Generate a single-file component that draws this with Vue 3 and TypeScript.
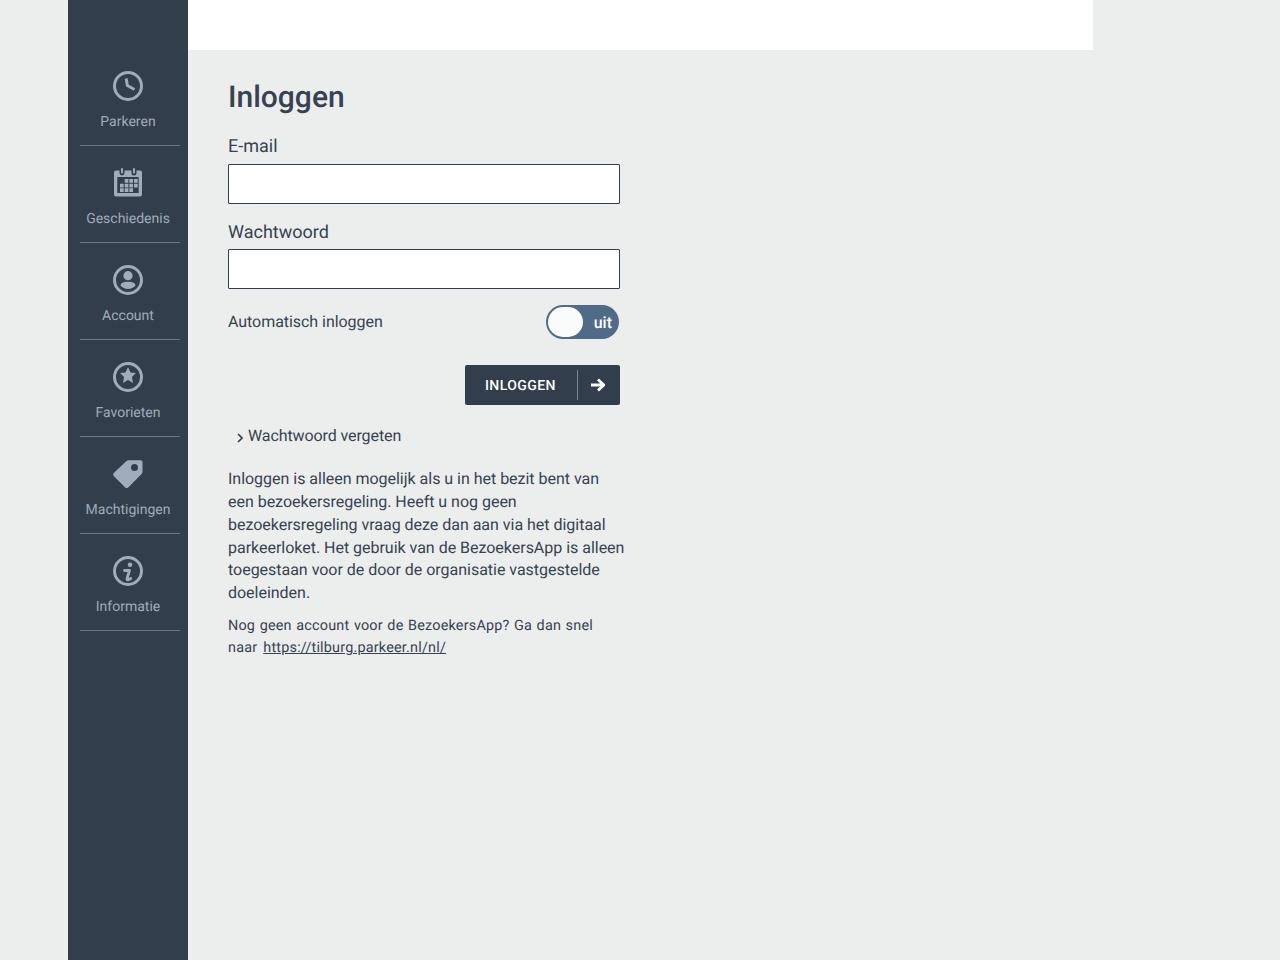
<script setup lang="ts">
const items: { label: string; icon: string }[] = [
  { label: 'Parkeren', icon: 'clock' },
  { label: 'Geschiedenis', icon: 'calendar' },
  { label: 'Account', icon: 'user' },
  { label: 'Favorieten', icon: 'star' },
  { label: 'Machtigingen', icon: 'tag' },
  { label: 'Informatie', icon: 'info' },
]
</script>

<template>
  <div class="page">
    <aside class="sidebar">
      <nav class="nav">
        <a v-for="item in items" :key="item.label" class="nav-item">
          <svg class="icon" viewBox="0 0 30 30" width="30" height="30" aria-hidden="true">
            <template v-if="item.icon === 'clock'">
              <circle cx="15" cy="15" r="13.500" fill="none" stroke="currentColor" stroke-width="3" />
              <path d="M13.200 7.500L14.300 14.500L21.500 18.500" fill="none" stroke="currentColor" stroke-width="3" stroke-linejoin="round" />
            </template>
            <template v-else-if="item.icon === 'calendar'">
              <path fill="currentColor" fill-rule="evenodd" d="M3 2.500h3.500v2.500a2.500 2.500 0 0 0 5 0V2.500h7v2.500a2.500 2.500 0 0 0 5 0V2.500H27a2 2 0 0 1 2 2V26.500a2 2 0 0 1-2 2H3a2 2 0 0 1-2-2V4.500a2 2 0 0 1 2-2zM4.300 9v16h21.400V9z" />
              <rect x="8" y="0" width="2" height="5.500" rx="1" fill="currentColor" />
              <rect x="20" y="0" width="2" height="5.500" rx="1" fill="currentColor" />
              <path fill="currentColor" d="M11.700 11h3.700v3.700h-3.700zM16.300 11h3.700v3.700h-3.700zM21 11h3.700v3.700h-3.700zM7 15.700h3.700v3.700h-3.700zM11.700 15.700h3.700v3.700h-3.700zM16.300 15.700h3.700v3.700h-3.700zM21 15.700h3.700v3.700h-3.700zM7 20.300h3.700v3.700h-3.700zM11.700 20.300h3.700v3.700h-3.700zM16.300 20.300h3.700v3.700h-3.700z" />
            </template>
            <template v-else-if="item.icon === 'user'">
              <circle cx="15" cy="15" r="13.500" fill="none" stroke="currentColor" stroke-width="3" />
              <circle cx="15" cy="10.700" r="4.600" fill="currentColor" />
              <path fill="currentColor" d="M7.500 20.500c0-2.200 3-3.700 7.500-3.700s7.500 1.500 7.500 3.700c-1.800 2.200-4.500 3.500-7.500 3.500s-5.700-1.300-7.500-3.500z" />
            </template>
            <template v-else-if="item.icon === 'star'">
              <circle cx="15" cy="15" r="13.500" fill="none" stroke="currentColor" stroke-width="3" />
              <path fill="currentColor" d="M15 5l2.500 5.500 5.500.6-4.100 3.900 1.200 6-5.100-3-5.100 3 1.200-6-4.100-3.900 5.500-.6z" />
            </template>
            <template v-else-if="item.icon === 'tag'">
              <path fill="currentColor" fill-rule="evenodd" d="M15.500 1.200H27.500a2 2 0 0 1 2 2V13a3 3 0 0 1-.9 2L15.500 28.200a2.500 2.500 0 0 1-3.500 0L1 17.200a2.500 2.500 0 0 1 0-3.500L13.500 2a3 3 0 0 1 2-.8zM21.500 5a3.500 3.500 0 1 0 0 7 3.500 3.500 0 0 0 0-7z" />
            </template>
            <template v-else>
              <circle cx="15" cy="15" r="13.500" fill="none" stroke="currentColor" stroke-width="3" />
              <circle cx="17" cy="8.700" r="2.300" fill="currentColor" />
              <path fill="none" stroke="currentColor" stroke-width="2.800" stroke-linecap="round" stroke-linejoin="round" d="M11.500 14.500h5l-2.500 8c-.3 1 .4 1.500 1.200 1.200l2.600-1.300" />
            </template>
          </svg>
          <span class="nav-label">{{ item.label }}</span>
        </a>
      </nav>
    </aside>

    <div class="content">
      <header class="topbar"></header>
      <main class="main">
        <h1 class="title">Inloggen</h1>
        <form class="form" @submit.prevent>
          <label class="label" for="email">E-mail</label>
          <input id="email" class="input" type="email" />
          <label class="label label-second" for="password">Wachtwoord</label>
          <input id="password" class="input" type="password" />

          <div class="auto-row">
            <span class="auto-text">Automatisch inloggen</span>
            <span class="toggle">
              <span class="knob"></span>
              <span class="toggle-text">uit</span>
            </span>
          </div>

          <div class="actions">
            <button class="button" type="submit">
              <span class="button-text">INLOGGEN</span>
              <span class="button-icon">
                <svg viewBox="0 0 16 14" width="16" height="14" aria-hidden="true">
                  <path d="M1 7h12.500M8 1.500L13.800 7 8 12.500" fill="none" stroke="#fff" stroke-width="2.800" stroke-linejoin="round" />
                </svg>
              </span>
            </button>
          </div>

          <a class="forgot">
            <svg viewBox="0 0 6 10" width="6" height="10" aria-hidden="true">
              <path d="M1 1l4 4-4 4" fill="none" stroke="#323e4c" stroke-width="1.600" />
            </svg>
            <span>Wachtwoord vergeten</span>
          </a>

          <p class="intro">Inloggen is alleen mogelijk als u in het bezit bent van een bezoekersregeling. Heeft u nog geen bezoekersregeling vraag deze dan aan via het digitaal parkeerloket. Het gebruik van de BezoekersApp is alleen toegestaan voor de door de organisatie vastgestelde doeleinden.</p>
          <div class="note">
            <span class="note-line">Nog geen account voor de BezoekersApp? Ga dan snel</span>
            <span class="note-line"><span>naar</span><a class="link">https://tilburg.parkeer.nl/nl/</a></span>
          </div>
        </form>
      </main>
    </div>
  </div>
</template>

<style>
html, body { margin: 0; background: #eceeed; }
</style>

<style scoped>
.page {
  display: flex;
  min-height: 960px;
  height: 960px;
  overflow: hidden;
  padding-left: 68px;
  box-sizing: border-box;
  background: #eceeed;
  color: #364251;
  font-family: Roboto, "Liberation Sans", sans-serif;
  text-rendering: geometricPrecision;
}
.sidebar {
  flex: 0 0 120px;
  background: #323e4c;
  padding-top: 49px;
  box-sizing: border-box;
}
.nav { display: flex; flex-direction: column; }
.nav-item {
  box-sizing: border-box;
  height: 97px;
  margin-left: 12px;
  width: 100px;
  display: flex;
  flex-direction: column;
  align-items: center;
  border-bottom: 1px solid #6c7887;
  color: #a0abbb;
  padding-top: 22px;
}
.icon { display: block; flex: none; margin-left: -4px; }
.nav-label {
  font-size: 14px;
  line-height: 20px;
  margin-top: 11px;
  margin-left: -4px;
  white-space: nowrap;
}
.content { flex: 0 0 905px; display: flex; flex-direction: column; }
.topbar { height: 50px; background: #fff; flex: none; }
.main { padding: 29px 0 0 40px; }
.title {
  margin: 0;
  font-size: 30px;
  line-height: 38px;
  font-weight: 500;
}
.form { width: 392px; display: flex; flex-direction: column; margin-top: 16px; }
.label { font-size: 18px; line-height: 24px; margin-bottom: 7px; position: relative; top: 2px; }
.label-second { margin-top: 15px; margin-bottom: 6px; }
.input {
  box-sizing: border-box;
  height: 40px;
  width: 100%;
  border: 1px solid #323e4c;
  border-radius: 1px;
  background: #fff;
  padding: 0 8px;
  outline: none;
}
.auto-row {
  display: flex;
  justify-content: space-between;
  align-items: center;
  margin-top: 16px;
  font-size: 16px;
  height: 34px;
}
.auto-text { letter-spacing: -0.05px; margin-top: -2px; }
.toggle {
  box-sizing: border-box;
  width: 73px;
  height: 34px;
  border-radius: 17px;
  background: #4f6b88;
  position: relative;
  display: flex;
  align-items: center;
  justify-content: flex-end;
  padding-right: 7px;
  margin-right: 1px;
}
.knob {
  position: absolute;
  left: 2px;
  top: 2px;
  width: 35px;
  height: 30px;
  border-radius: 15px;
  background: #fafbfb;
}
.toggle-text { color: #fff; font-size: 16px; font-weight: 500; }
.actions { display: flex; justify-content: flex-end; margin-top: 26px; }
.button {
  width: 155px;
  height: 40px;
  border: 0;
  border-radius: 2px;
  background: #323e4c;
  color: #fff;
  display: flex;
  align-items: center;
  padding: 0;
  font-family: inherit;
  text-rendering: geometricPrecision;
}
.button-text {
  width: 112px;
  box-sizing: border-box;
  padding-left: 20px;
  padding-top: 2px;
  text-align: left;
  font-size: 14px;
  font-weight: 500;
  letter-spacing: 0.4px;
}
.button-icon {
  height: 30px;
  flex: 1;
  border-left: 1px solid #7d8793;
  display: flex;
  align-items: center;
  justify-content: center;
  padding-right: 2px;
}
.forgot {
  display: flex;
  align-items: center;
  gap: 5px;
  margin-top: 19px;
  padding-left: 9px;
  font-size: 16px;
  line-height: 23px;
  letter-spacing: -0.1px;
}
.forgot svg { margin-top: 4px; }
.intro { margin: 21px -7px 0 0; font-size: 16px; line-height: 22.860px; letter-spacing: -0.02px; }
.note { margin: 10px 0 0; font-size: 14.400px; line-height: 22px; letter-spacing: 0.2px; word-spacing: 0.750px; }
.note-line { display: block; }
.link { text-decoration: underline; margin-left: 6px; }
</style>
